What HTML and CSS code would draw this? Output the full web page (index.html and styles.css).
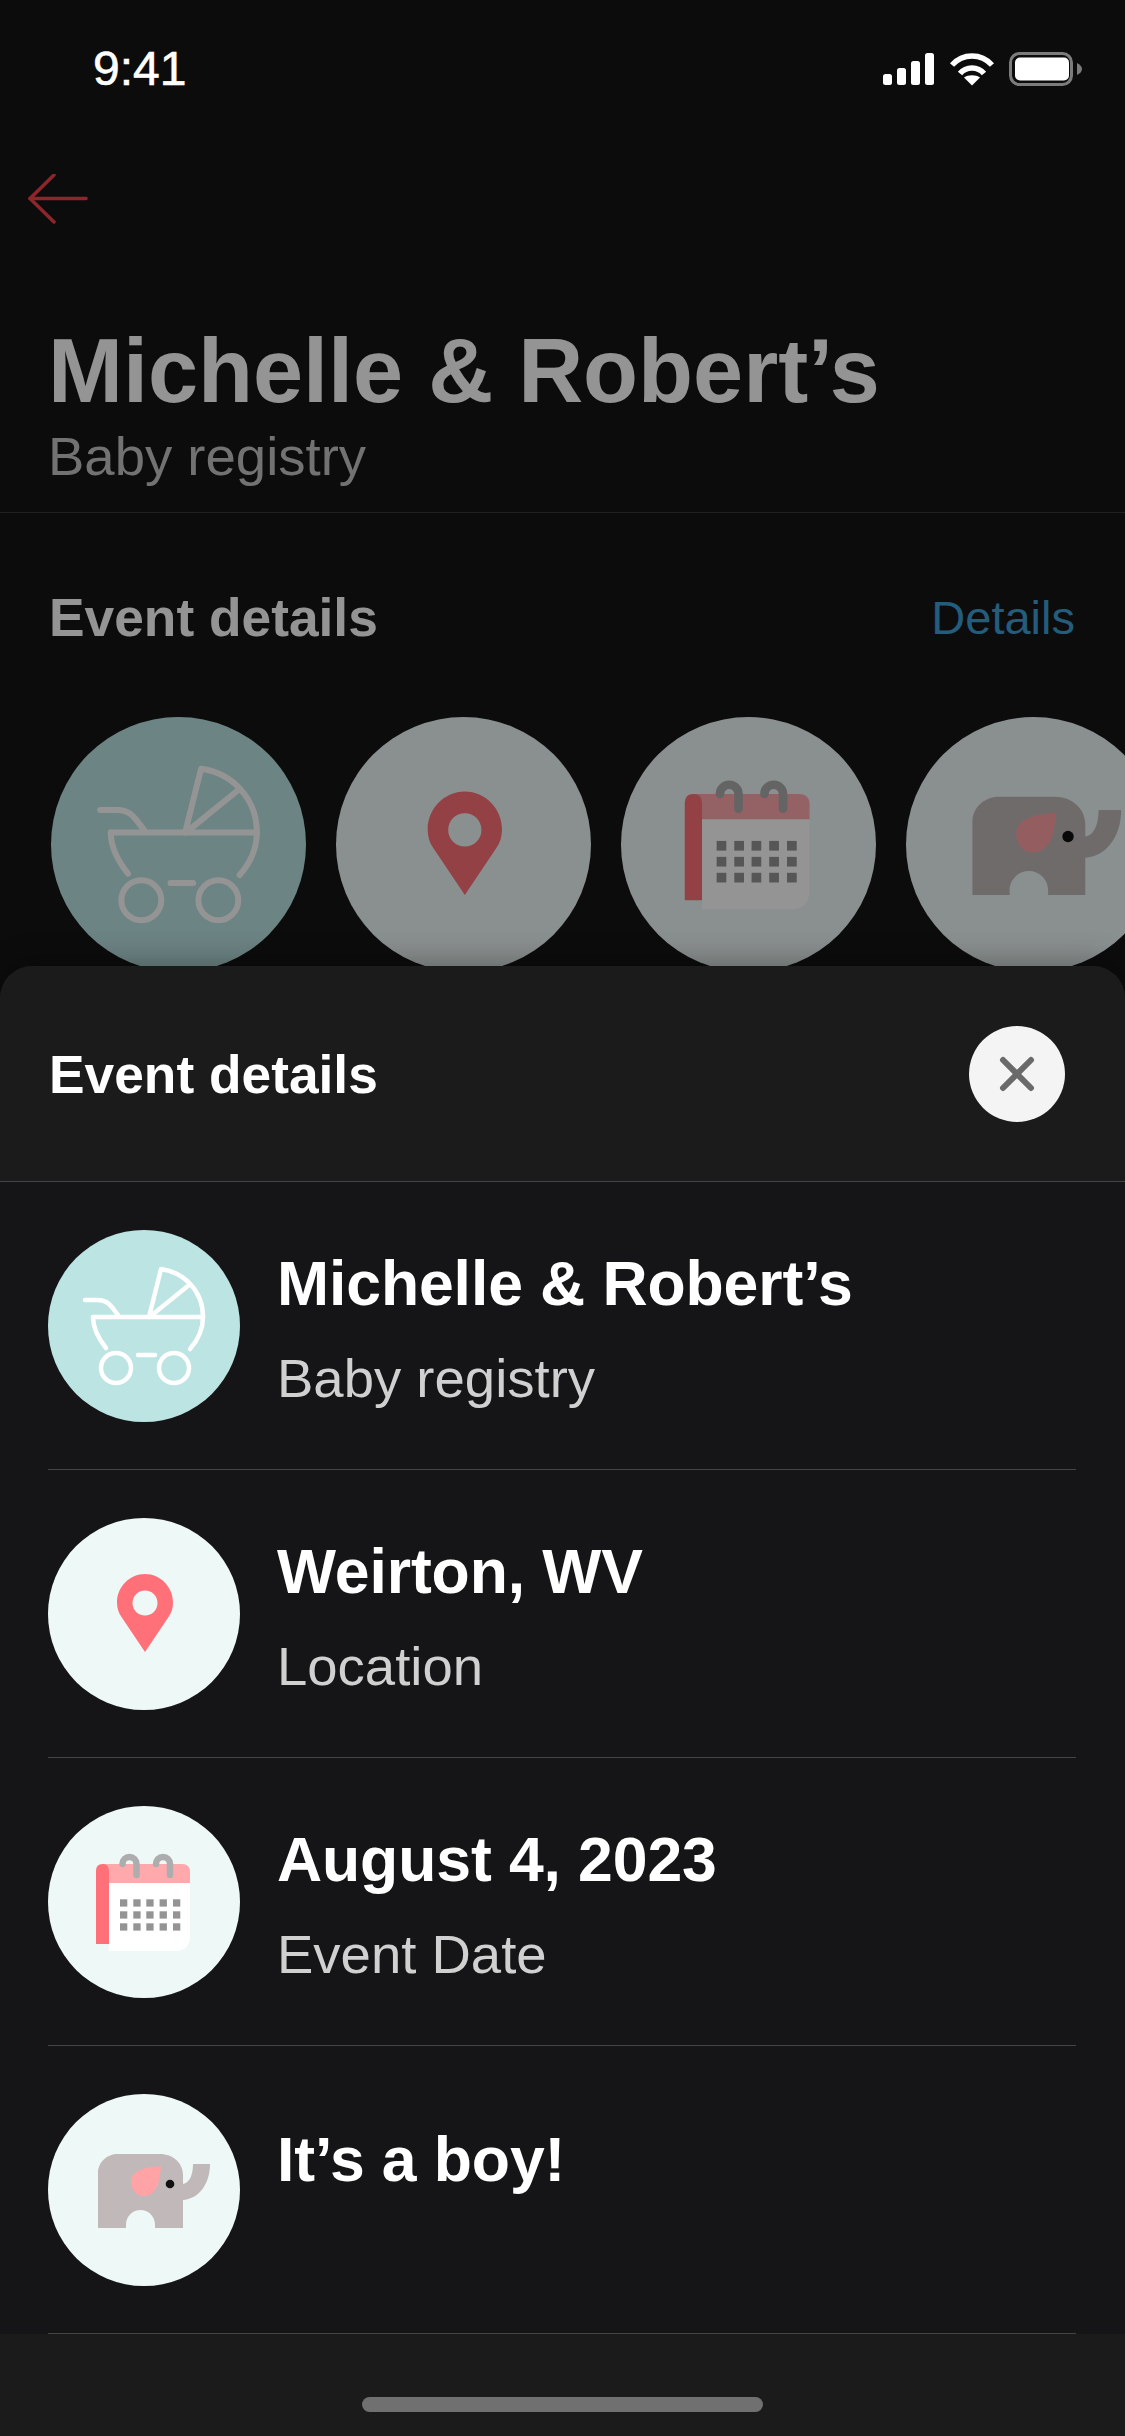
FILE: index.html
```html
<!DOCTYPE html>
<html lang="en">
<head>
    <meta charset="UTF-8">
    <meta name="viewport" content="width=device-width, initial-scale=1.0">
    <link rel="stylesheet" href="styles.css">
    <title>Registry</title>
</head>
<body>
    <svg class="defs" width="0" height="0">
        <!-- stroller -->
        <symbol id="ico-stroller" viewBox="0 0 192 192">
            <g fill="none" stroke="#fff" stroke-width="4.500" stroke-linecap="round" stroke-linejoin="round">
                <path d="M37 70H50C60 70 63 76 70 85"/>
                <path d="M45 87H155"/>
                <path d="M45 87C45 98 50 108 58 118"/>
                <path d="M155 87C155 100 150 110 142 119"/>
                <path d="M101 87L113 39C135 42 155 60 155 87"/>
                <path d="M104 85L141 55"/>
                <circle cx="68" cy="138" r="15"/>
                <circle cx="126" cy="138" r="15"/>
                <path d="M90 125H107"/>
            </g>
        </symbol>
        <!-- map pin -->
        <symbol id="ico-pin" viewBox="0 0 192 192">
            <path fill-rule="evenodd" fill="#ff7079" d="M97 134L73.500 99C70.500 95 69 90 69 84.500C69 69 81.500 56 97 56C112.500 56 125 69 125 84.500C125 90 123.500 95 120.500 99ZM97 72.500C90 72.500 84.500 78 84.500 85C84.500 92 90 97.500 97 97.500C104 97.500 109.500 92 109.500 85C109.500 78 104 72.500 97 72.500Z"/>
        </symbol>
        <!-- calendar -->
        <symbol id="ico-calendar" viewBox="0 0 192 192">
            <g transform="translate(0,-4)">
                <path fill="#fff" d="M61 78H142V134Q142 149 127 149H61Z"/>
                <path fill="#ffa9ad" d="M55 62H134Q142 62 142 70V81H55Z"/>
                <path fill="#ff7079" d="M48 142V69Q48 62 54.500 62Q61 62 61 69V142Z"/>
                <g fill="none" stroke="#adadad" stroke-width="6.500" stroke-linecap="round">
                    <path d="M74.500 62A7 7 0 0 1 88.500 62V73"/>
                    <path d="M108 62A7 7 0 0 1 122 62V73"/>
                </g>
                <g fill="#949494">
                    <rect x="72" y="97.300" width="7.300" height="7.300"/><rect x="85.300" y="97.300" width="7.300" height="7.300"/><rect x="98.300" y="97.300" width="7.300" height="7.300"/><rect x="111.600" y="97.300" width="7.300" height="7.300"/><rect x="125" y="97.300" width="7.300" height="7.300"/>
                    <rect x="72" y="109.300" width="7.300" height="7.300"/><rect x="85.300" y="109.300" width="7.300" height="7.300"/><rect x="98.300" y="109.300" width="7.300" height="7.300"/><rect x="111.600" y="109.300" width="7.300" height="7.300"/><rect x="125" y="109.300" width="7.300" height="7.300"/>
                    <rect x="72" y="121.300" width="7.300" height="7.300"/><rect x="85.300" y="121.300" width="7.300" height="7.300"/><rect x="98.300" y="121.300" width="7.300" height="7.300"/><rect x="111.600" y="121.300" width="7.300" height="7.300"/><rect x="125" y="121.300" width="7.300" height="7.300"/>
                </g>
            </g>
        </symbol>
        <!-- elephant -->
        <symbol id="ico-elephant" viewBox="0 0 192 192">
            <path fill="#c0b8b9" d="M50 134V79C50 68 59 60 70 60H112C125 60 135 69 135 81V90C142 89 145 80 145 70H162C162 91 150 105 135 106V134H107V130.500C107 122 100 116 92.500 116C85 116 78 122 78 130.500V134Z"/>
            <path fill="#ffa3a6" d="M113 72C112 85 110 102 95 102C88 102 83 95 83 88C83 76 98 73 113 72Z"/>
            <circle cx="122" cy="90" r="4.300" fill="#111"/>
        </symbol>
    </svg>

    <div class="screen">
        <div class="statusbar">
            <span class="time">9:41</span>
            <div class="status-icons">
                <svg width="52" height="32" viewBox="0 0 52 32" fill="#fff">
                    <rect x="0" y="21" width="9" height="11" rx="2.500"/>
                    <rect x="14" y="15" width="9" height="17" rx="2.500"/>
                    <rect x="28" y="8" width="9" height="24" rx="2.500"/>
                    <rect x="42" y="0" width="9" height="32" rx="2.500"/>
                </svg>
                <svg width="46" height="34" viewBox="0 0 46 34" fill="none" stroke="#fff" stroke-width="5.500">
                    <path d="M3 13C14 1 32 1 43 13"/>
                    <path d="M11 21.500C17 14 29 14 35 21.500"/>
                    <path fill="#fff" stroke="none" d="M23 33.500L15 25.500C19 22.500 27 22.500 31 25.500Z"/>
                </svg>
                <svg width="73" height="34" viewBox="0 0 73 34">
                    <rect x="1.500" y="1.500" width="61" height="31" rx="9" fill="none" stroke="#7c7c7c" stroke-width="3"/>
                    <rect x="6" y="5.500" width="54" height="23" rx="5" fill="#fff"/>
                    <path d="M68 11C71 12.500 73 14.500 73 17C73 19.500 71 21.500 68 23Z" fill="#7c7c7c"/>
                </svg>
            </div>
        </div>

        <div class="registry">
            <div class="backrow">
                <svg width="60" height="50" viewBox="0 0 60 50" fill="none" stroke="#f2434a" stroke-width="3.500" stroke-linecap="round" stroke-linejoin="round">
                    <path d="M58 24.500H2"/>
                    <path d="M26 1L2 24.500L26 48"/>
                </svg>
            </div>
            <div class="registry-head">
                <h1>Michelle &amp; Robert’s</h1>
                <p>Baby registry</p>
            </div>
            <div class="section-row">
                <h2>Event details</h2>
                <a class="details-link">Details</a>
            </div>
            <div class="bubbles">
                <div class="bubble teal"><svg><use href="#ico-stroller"/></svg></div>
                <div class="bubble"><svg><use href="#ico-pin"/></svg></div>
                <div class="bubble"><svg><use href="#ico-calendar"/></svg></div>
                <div class="bubble"><svg><use href="#ico-elephant"/></svg></div>
            </div>
        </div>

        <div class="scrim"></div>

        <div class="sheet">
            <div class="sheet-head">
                <h2>Event details</h2>
                <button class="close">
                    <svg width="36" height="36" viewBox="0 0 36 36" stroke="#6a6a6a" stroke-width="6" stroke-linecap="round">
                        <path d="M4 4L32 32"/>
                        <path d="M32 4L4 32"/>
                    </svg>
                </button>
            </div>
            <div class="list">
                <div class="row">
                    <div class="bubble small teal"><svg><use href="#ico-stroller"/></svg></div>
                    <div class="row-text">
                        <h3>Michelle &amp; Robert’s</h3>
                        <p>Baby registry</p>
                    </div>
                </div>
                <div class="row">
                    <div class="bubble small"><svg><use href="#ico-pin"/></svg></div>
                    <div class="row-text">
                        <h3>Weirton, WV</h3>
                        <p>Location</p>
                    </div>
                </div>
                <div class="row">
                    <div class="bubble small"><svg><use href="#ico-calendar"/></svg></div>
                    <div class="row-text">
                        <h3>August 4, 2023</h3>
                        <p>Event Date</p>
                    </div>
                </div>
                <div class="row">
                    <div class="bubble small"><svg><use href="#ico-elephant"/></svg></div>
                    <div class="row-text single">
                        <h3>It’s a boy!</h3>
                    </div>
                </div>
            </div>
            <div class="sheet-foot">
                <div class="home-bar"></div>
            </div>
        </div>
    </div>
</body>
</html>
```

FILE: styles.css
```css
*{
    margin: 0;
    padding: 0;
    box-sizing: border-box;
}
body{
    width: 1125px;
    height: 2436px;
    overflow: hidden;
    background: #151517;
    font-family: "Liberation Sans", Arial, sans-serif;
    color: #fff;
}
.defs{
    position: absolute;
}
.screen{
    position: relative;
    width: 1125px;
    height: 2436px;
    overflow: hidden;
}

/* status bar sits above the scrim */
.statusbar{
    position: relative;
    z-index: 3;
    height: 132px;
    padding: 46px 43px 0 93px;
    display: flex;
    justify-content: space-between;
    align-items: flex-start;
}
.time{
    font-size: 48px;
    line-height: 46px;
    font-weight: 500;
    -webkit-text-stroke: 0.6px #fff;
}
.status-icons{
    display: flex;
    align-items: center;
    gap: 14px;
    padding-top: 6px;
}

.backrow{
    height: 130px;
    padding: 42px 0 0 28px;
}
.registry-head{
    height: 251px;
    padding: 63px 48px 0;
    border-bottom: 1px solid #3a3a3c;
}
.registry-head h1{
    font-size: 90px;
    line-height: 92px;
}
.registry-head p{
    font-size: 54.500px;
    line-height: 60px;
    margin-top: 10px;
    color: #c4c4c4;
}
.section-row{
    display: flex;
    justify-content: space-between;
    align-items: center;
    padding: 4px 50px 0 49px;
    height: 204px;
}
.section-row h2, .sheet-head h2{
    font-size: 53.300px;
    font-weight: 700;
}
.details-link{
    font-size: 47px;
    color: #3f9fd6;
}
.bubbles{
    display: flex;
    gap: 30px;
    padding-left: 51px;
}
.bubble{
    flex: none;
    width: 255px;
    height: 255px;
    border-radius: 50%;
    background: #eef8f7;
}
.bubble svg{
    display: block;
    width: 100%;
    height: 100%;
}
.bubble.teal{
    background: #bce4e3;
}
.bubble.small{
    width: 192px;
    height: 192px;
}

/* dims everything behind the sheet */
.scrim{
    position: absolute;
    inset: 0;
    z-index: 1;
    background: rgba(0,0,0,0.42);
}

.sheet{
    position: absolute;
    z-index: 2;
    left: 0;
    right: 0;
    bottom: 0;
    height: 1470px;
    background: #151517;
    border-radius: 32px 32px 0 0;
    box-shadow: 0 -4px 30px rgba(0,0,0,0.3);
    display: flex;
    flex-direction: column;
}
.sheet-head{
    flex: none;
    height: 216px;
    padding: 2px 60px 0 49px;
    display: flex;
    justify-content: space-between;
    align-items: center;
    background: #1b1b1b;
    border-radius: 32px 32px 0 0;
    border-bottom: 1px solid #444;
}
.close{
    width: 96px;
    height: 96px;
    margin-top: -2px;
    border: none;
    border-radius: 50%;
    background: #f4f4f4;
    display: flex;
    align-items: center;
    justify-content: center;
}
.list{
    flex: none;
}
.row{
    height: 288px;
    margin: 0 49px 0 48px;
    padding-top: 48px;
    display: flex;
    gap: 37px;
    border-bottom: 1px solid #444;
}
.row-text h3{
    font-size: 62.500px;
    line-height: 70px;
    margin-top: 18px;
    letter-spacing: -0.1px;
}
.row-text.single h3{
    margin-top: 30px;
}
.row-text p{
    font-size: 54.500px;
    line-height: 60px;
    margin-top: 31px;
    color: #d0d0d0;
}
.sheet-foot{
    flex: 1;
    background: #1b1b1b;
    padding-top: 63px;
    display: flex;
    justify-content: center;
    align-items: flex-start;
}
.home-bar{
    width: 401px;
    height: 15px;
    border-radius: 8px;
    background: #707070;
}
```
